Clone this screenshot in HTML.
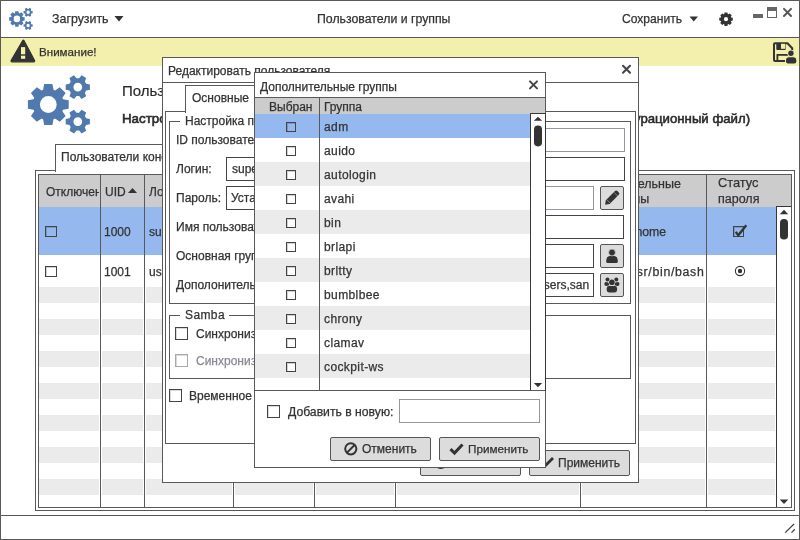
<!DOCTYPE html>
<html><head><meta charset="utf-8"><style>
html,body{margin:0;padding:0;width:800px;height:540px;overflow:hidden;background:#fff;}
body{position:relative;font-family:"Liberation Sans", sans-serif;}
body>div{-webkit-text-stroke:0.25px currentColor;will-change:transform;}
body>div,body>svg{position:absolute;box-sizing:border-box;}
</style></head><body>
<div style="left:0px;top:0px;width:800px;height:540px;background:#fff;border:1px solid #595959;"></div>
<svg style="left:0px;top:0px;width:40px;height:37px" viewBox="0 0 40 37"><path fill="#5079ad" fill-rule="evenodd" d="M14.92,13.31 L15.33,11.15 L18.47,11.15 L18.88,13.31 L19.45,13.55 L21.27,12.31 L23.49,14.53 L22.25,16.35 L22.49,16.92 L24.65,17.33 L24.65,20.47 L22.49,20.88 L22.25,21.45 L23.49,23.27 L21.27,25.49 L19.45,24.25 L18.88,24.49 L18.47,26.65 L15.33,26.65 L14.92,24.49 L14.35,24.25 L12.53,25.49 L10.31,23.27 L11.55,21.45 L11.31,20.88 L9.15,20.47 L9.15,17.33 L11.31,16.92 L11.55,16.35 L10.31,14.53 L12.53,12.31 L14.35,13.55Z M20.09,18.90 A3.192,3.192 0 1,0 13.71,18.90 A3.192,3.192 0 1,0 20.09,18.90Z M31.29,11.02 L32.71,11.28 L32.71,13.29 L31.29,13.56 L30.80,14.40 L31.28,15.77 L29.54,16.78 L28.60,15.67 L27.62,15.67 L26.68,16.78 L24.94,15.77 L25.42,14.40 L24.93,13.56 L23.51,13.29 L23.51,11.28 L24.93,11.02 L25.42,10.17 L24.94,8.80 L26.68,7.80 L27.62,8.90 L28.60,8.90 L29.54,7.80 L31.28,8.80 L30.80,10.17Z M29.78,12.29 A1.6720000000000002,1.6720000000000002 0 1,0 26.44,12.29 A1.6720000000000002,1.6720000000000002 0 1,0 29.78,12.29Z M31.29,24.13 L32.71,24.39 L32.71,26.40 L31.29,26.67 L30.80,27.51 L31.28,28.88 L29.54,29.89 L28.60,28.78 L27.62,28.78 L26.68,29.89 L24.94,28.88 L25.42,27.51 L24.93,26.67 L23.51,26.40 L23.51,24.39 L24.93,24.13 L25.42,23.28 L24.94,21.91 L26.68,20.91 L27.62,22.01 L28.60,22.01 L29.54,20.91 L31.28,21.91 L30.80,23.28Z M29.78,25.40 A1.6720000000000002,1.6720000000000002 0 1,0 26.44,25.40 A1.6720000000000002,1.6720000000000002 0 1,0 29.78,25.40Z"/></svg>
<div style="left:52px;top:12.60px;font-size:12.4px;line-height:12.4px;color:#333333;font-weight:normal;white-space:pre;">Загрузить</div>
<svg style="left:114px;top:15px;width:10px;height:7px" viewBox="0 0 10 7"><path d="M0.5,1 L9.5,1 L5,6.5Z" fill="#333"/></svg>
<div style="left:317px;top:13.19px;font-size:12.3px;line-height:12.3px;color:#333333;font-weight:normal;white-space:pre;">Пользователи и группы</div>
<div style="left:622px;top:13.26px;font-size:12.1px;line-height:12.1px;color:#333333;font-weight:normal;white-space:pre;">Сохранить</div>
<svg style="left:689px;top:15px;width:10px;height:7px" viewBox="0 0 10 7"><path d="M0.5,1.5 L9,1.5 L4.75,6.5Z" fill="#333"/></svg>
<svg style="left:716px;top:9px;width:20px;height:20px" viewBox="0 0 20 20"><path fill="#333" fill-rule="evenodd" d="M8.20,5.11 L8.63,3.44 L11.37,3.44 L11.80,5.11 L12.33,5.33 L13.81,4.45 L15.75,6.39 L14.87,7.87 L15.09,8.40 L16.76,8.83 L16.76,11.57 L15.09,12.00 L14.87,12.53 L15.75,14.01 L13.81,15.95 L12.33,15.07 L11.80,15.29 L11.37,16.96 L8.63,16.96 L8.20,15.29 L7.67,15.07 L6.19,15.95 L4.25,14.01 L5.13,12.53 L4.91,12.00 L3.24,11.57 L3.24,8.83 L4.91,8.40 L5.13,7.87 L4.25,6.39 L6.19,4.45 L7.67,5.33Z M12.10,10.20 A2.1,2.1 0 1,0 7.90,10.20 A2.1,2.1 0 1,0 12.10,10.20Z"/></svg>
<div style="left:753px;top:14px;width:10px;height:4px;background:#666;"></div>
<div style="left:767px;top:7px;width:10px;height:11px;border:1px solid #666;border-width:4.5px 1px 1px 1px;"></div>
<svg style="left:782px;top:7px;width:11px;height:11px" viewBox="0 0 11 11"><path d="M2,1.9 L9,9 M9,1.9 L2,9" stroke="#555" stroke-width="2" stroke-linecap="round"/></svg>
<div style="left:1px;top:37px;width:798px;height:1px;background:#595959;"></div>
<div style="left:1px;top:38px;width:798px;height:28px;background:#f3efac;"></div>
<svg style="left:10px;top:39px;width:26px;height:24px" viewBox="0 0 26 24"><path d="M12.9,1.4 Q13.3,0.9 13.8,1.4 L24.6,21.6 Q24.9,22.8 23.8,22.8 L1.9,22.8 Q0.8,22.8 1.1,21.6Z" fill="#333" stroke="#333" stroke-width="1.2" stroke-linejoin="round"/><rect x="11" y="8.1" width="4.2" height="7.2" fill="#f3efac"/><rect x="11" y="16.7" width="4.2" height="3.1" fill="#f3efac"/></svg>
<div style="left:39.3px;top:46.08px;font-size:11.6px;line-height:11.6px;color:#333333;font-weight:normal;white-space:pre;">Внимание!</div>
<svg style="left:771px;top:40px;width:28px;height:26px" viewBox="0 0 28 26"><path d="M4,3.2 L16.5,3.2 L21.2,8.2 L21.2,20.9 L4,20.9 Q3,20.9 3,19.9 L3,4.2 Q3,3.2 4,3.2Z" fill="none" stroke="#333" stroke-width="2" stroke-linejoin="round"/><rect x="5.3" y="3" width="9.4" height="7" rx="0.8" fill="#333"/><rect x="10" y="3.8" width="4.2" height="5" fill="#f3efac"/><rect x="6.4" y="14.9" width="11.9" height="6" fill="none" stroke="#333" stroke-width="1.8"/><circle cx="19.9" cy="13.3" r="3.6" fill="#f3efac"/><rect x="14" y="16.2" width="12.3" height="8.4" rx="3.4" fill="#f3efac"/><circle cx="19.9" cy="13.3" r="2.7" fill="#333"/><path d="M15,21.6 L15,20.4 Q15,17.2 18.2,17.2 L22.1,17.2 Q25.3,17.2 25.3,20.4 L25.3,21.6 Q25.3,23.6 23.3,23.6 L17,23.6 Q15,23.6 15,21.6Z" fill="#333"/></svg>
<div style="left:1px;top:515px;width:798px;height:1px;background:#595959;"></div>
<svg style="left:783px;top:522px;width:14px;height:12px" viewBox="0 0 14 12"><path d="M2.2,10.6 L11,2 M8.5,10.6 L11.8,7.3" stroke="#444" stroke-width="1.3"/></svg>
<svg style="left:0px;top:0px;width:120px;height:140px" viewBox="0 0 120 140"><path fill="#5079ad" fill-rule="evenodd" d="M43.10,89.79 L44.17,84.11 L52.43,84.11 L53.50,89.79 L55.02,90.42 L59.79,87.16 L65.64,93.01 L62.38,97.78 L63.01,99.30 L68.69,100.37 L68.69,108.63 L63.01,109.70 L62.38,111.22 L65.64,115.99 L59.79,121.84 L55.02,118.58 L53.50,119.21 L52.43,124.89 L44.17,124.89 L43.10,119.21 L41.58,118.58 L36.81,121.84 L30.96,115.99 L34.22,111.22 L33.59,109.70 L27.91,108.63 L27.91,100.37 L33.59,99.30 L34.22,97.78 L30.96,93.01 L36.81,87.16 L41.58,90.42Z M56.70,104.50 A8.4,8.4 0 1,0 39.90,104.50 A8.4,8.4 0 1,0 56.70,104.50Z M86.16,83.76 L89.91,84.45 L89.91,89.75 L86.16,90.44 L84.87,92.67 L86.15,96.27 L81.57,98.91 L79.09,96.01 L76.51,96.01 L74.03,98.91 L69.45,96.27 L70.73,92.67 L69.44,90.44 L65.69,89.75 L65.69,84.45 L69.44,83.76 L70.73,81.53 L69.45,77.93 L74.03,75.29 L76.51,78.19 L79.09,78.19 L81.57,75.29 L86.15,77.93 L84.87,81.53Z M82.20,87.10 A4.4,4.4 0 1,0 73.40,87.10 A4.4,4.4 0 1,0 82.20,87.10Z M86.16,118.26 L89.91,118.95 L89.91,124.25 L86.16,124.94 L84.87,127.17 L86.15,130.77 L81.57,133.41 L79.09,130.51 L76.51,130.51 L74.03,133.41 L69.45,130.77 L70.73,127.17 L69.44,124.94 L65.69,124.25 L65.69,118.95 L69.44,118.26 L70.73,116.03 L69.45,112.43 L74.03,109.79 L76.51,112.69 L79.09,112.69 L81.57,109.79 L86.15,112.43 L84.87,116.03Z M82.20,121.60 A4.4,4.4 0 1,0 73.40,121.60 A4.4,4.4 0 1,0 82.20,121.60Z"/></svg>
<div style="left:121.9px;top:83.20px;font-size:15px;line-height:15px;color:#2a2a2a;font-weight:normal;white-space:pre;-webkit-text-stroke:0.2px #2a2a2a;">Пользователи и группы</div>
<div style="left:121.9px;top:112.34px;font-size:13.3px;line-height:13.3px;color:#2a2a2a;font-weight:normal;white-space:pre;-webkit-text-stroke:0.6px #2a2a2a;">Настройки</div>
<div style="right:49.5px;top:112.43px;font-size:13.2px;line-height:13.2px;color:#2a2a2a;font-weight:normal;white-space:pre;-webkit-text-stroke:0.55px #2a2a2a;">(конфигурационный файл)</div>
<div style="left:55px;top:144px;width:246px;height:28px;background:#fff;border:1px solid #595959;border-bottom:none;"></div>
<div style="left:61.2px;top:151.14px;font-size:12px;line-height:12px;color:#333333;font-weight:normal;white-space:pre;">Пользователи конфигурационного файла</div>
<div style="left:35px;top:170px;width:760px;height:341px;border:1px solid #595959;"></div>
<div style="left:56px;top:170px;width:244px;height:1px;background:#fff;"></div>
<div style="left:38px;top:174px;width:754px;height:334px;border:1px solid #595959;"></div>
<div style="left:39px;top:175px;width:752px;height:32px;background:#cccccc;"></div>
<div style="left:39px;top:207px;width:737px;height:48px;background:#95b9ef;"></div>
<div style="left:39px;top:287px;width:736px;height:16px;background:#ebebeb;"></div>
<div style="left:39px;top:319px;width:736px;height:16px;background:#ebebeb;"></div>
<div style="left:39px;top:351px;width:736px;height:16px;background:#ebebeb;"></div>
<div style="left:39px;top:383px;width:736px;height:16px;background:#ebebeb;"></div>
<div style="left:39px;top:415px;width:736px;height:16px;background:#ebebeb;"></div>
<div style="left:39px;top:447px;width:736px;height:16px;background:#ebebeb;"></div>
<div style="left:39px;top:479px;width:736px;height:16px;background:#ebebeb;"></div>
<div style="left:99px;top:287px;width:3px;height:220px;background:#fff;"></div>
<div style="left:100px;top:175px;width:1px;height:332px;background:#595959;"></div>
<div style="left:143px;top:287px;width:3px;height:220px;background:#fff;"></div>
<div style="left:144px;top:175px;width:1px;height:332px;background:#595959;"></div>
<div style="left:232px;top:287px;width:3px;height:220px;background:#fff;"></div>
<div style="left:233px;top:175px;width:1px;height:332px;background:#595959;"></div>
<div style="left:313px;top:287px;width:3px;height:220px;background:#fff;"></div>
<div style="left:314px;top:175px;width:1px;height:332px;background:#595959;"></div>
<div style="left:394px;top:287px;width:3px;height:220px;background:#fff;"></div>
<div style="left:395px;top:175px;width:1px;height:332px;background:#595959;"></div>
<div style="left:579px;top:287px;width:3px;height:220px;background:#fff;"></div>
<div style="left:580px;top:175px;width:1px;height:332px;background:#595959;"></div>
<div style="left:705px;top:287px;width:3px;height:220px;background:#fff;"></div>
<div style="left:706px;top:175px;width:1px;height:332px;background:#595959;"></div>
<div style="left:45.7px;top:186.44px;font-size:12px;line-height:12px;color:#333333;font-weight:normal;white-space:pre;width:53.3px;overflow:hidden;">Отключен</div>
<div style="left:104.5px;top:186.44px;font-size:12px;line-height:12px;color:#333333;font-weight:normal;white-space:pre;">UID</div>
<svg style="left:127px;top:187px;width:11px;height:7px" viewBox="0 0 11 7"><path d="M1,6 L10,6 L5.5,1Z" fill="#333"/></svg>
<div style="left:149px;top:186.44px;font-size:12px;line-height:12px;color:#333333;font-weight:normal;white-space:pre;width:83px;overflow:hidden;">Логин</div>
<div style="right:119px;top:177.72px;font-size:12.5px;line-height:12.5px;color:#333333;font-weight:normal;white-space:pre;">Дополнительные</div>
<div style="right:151px;top:193.32px;font-size:12.5px;line-height:12.5px;color:#333333;font-weight:normal;white-space:pre;">группы</div>
<div style="left:717.8px;top:177.46px;font-size:12.8px;line-height:12.8px;color:#333333;font-weight:normal;white-space:pre;">Статус</div>
<div style="left:717.8px;top:193.32px;font-size:12.5px;line-height:12.5px;color:#333333;font-weight:normal;white-space:pre;">пароля</div>
<div style="left:45px;top:226px;width:12px;height:12px;background:transparent;border:1px solid #444;box-shadow: inset 1px 1px 0 rgba(0,0,0,0.18);height:11px;"></div>
<div style="left:103.9px;top:226.14px;font-size:12px;line-height:12px;color:#333333;font-weight:normal;white-space:pre;">1000</div>
<div style="left:149px;top:226.14px;font-size:12px;line-height:12px;color:#333333;font-weight:normal;white-space:pre;width:83px;overflow:hidden;">superadmin</div>
<div style="right:133.39999999999998px;top:225.79px;font-size:12.3px;line-height:12.3px;color:#333333;font-weight:normal;white-space:pre;">/home</div>
<div style="left:733px;top:226px;width:11px;height:11px;background:transparent;border:1px solid #444;box-shadow: inset 1px 1px 0 rgba(0,0,0,0.18);"></div>
<svg style="left:734px;top:223px;width:14px;height:14px" viewBox="0 0 14 14"><path d="M1.8,8.8 L4.3,12.3 L12.3,2.3" fill="none" stroke="#333" stroke-width="2.3"/></svg>
<div style="left:45px;top:266px;width:12px;height:12px;background:#fff;border:1px solid #444;box-shadow: inset 1px 1px 0 rgba(0,0,0,0.18);height:11px;"></div>
<div style="left:103.9px;top:266.44px;font-size:12px;line-height:12px;color:#333333;font-weight:normal;white-space:pre;">1001</div>
<div style="left:149px;top:266.44px;font-size:12px;line-height:12px;color:#333333;font-weight:normal;white-space:pre;width:83px;overflow:hidden;">user</div>
<div style="right:95.5px;top:265.69px;font-size:12.3px;line-height:12.3px;color:#333333;font-weight:normal;white-space:pre;letter-spacing:0.7px;">/usr/bin/bash</div>
<svg style="left:734px;top:265px;width:12px;height:12px" viewBox="0 0 12 12"><circle cx="6" cy="6" r="4.6" fill="#fff" stroke="#333" stroke-width="1.1"/><circle cx="6" cy="6" r="2.2" fill="#333"/></svg>
<div style="left:776px;top:207px;width:15px;height:300px;background:#fff;"></div>
<div style="left:776px;top:207px;width:1px;height:300px;background:#383838;"></div>
<div style="left:776px;top:206px;width:15px;height:1px;background:#383838;"></div>
<svg style="left:777px;top:207px;width:14px;height:300px" viewBox="0 0 14 300"><path d="M2.8,7.2 L11.2,7.2 L7,2.8Z" fill="#333"/><rect x="3" y="12" width="8" height="20.6" rx="3.8" fill="#333"/><path d="M2.8,292.5 L11.2,292.5 L7,296.9Z" fill="#333"/></svg>
<div style="left:162px;top:57px;width:477px;height:426px;background:#fff;border:1px solid #595959;"></div>
<div style="left:167.7px;top:64.84px;font-size:12px;line-height:12px;color:#333333;font-weight:normal;white-space:pre;">Редактировать пользователя</div>
<svg style="left:621px;top:64px;width:11px;height:11px" viewBox="0 0 11 11"><path d="M2,1.8 L9,8.8 M9,1.8 L2,8.8" stroke="#444" stroke-width="2" stroke-linecap="round"/></svg>
<div style="left:163px;top:82px;width:475px;height:1px;background:#595959;"></div>
<div style="left:185px;top:85px;width:146px;height:28px;background:#fff;border:1px solid #595959;border-bottom:none;"></div>
<div style="left:191.7px;top:91.84px;font-size:12px;line-height:12px;color:#333333;font-weight:normal;white-space:pre;">Основные</div>
<div style="left:165px;top:111px;width:471px;height:333px;border:1px solid #595959;"></div>
<div style="left:186px;top:111px;width:144px;height:1px;background:#fff;"></div>
<div style="left:169px;top:121px;width:462px;height:183px;border:1px solid #595959;"></div>
<div style="left:180px;top:118px;width:151px;height:7px;background:#fff;"></div>
<div style="left:184.5px;top:114.94px;font-size:12px;line-height:12px;color:#333333;font-weight:normal;white-space:pre;">Настройка пользователя</div>
<div style="left:175.9px;top:134.24px;font-size:12px;line-height:12px;color:#333333;font-weight:normal;white-space:pre;">ID пользователя:</div>
<div style="left:175.9px;top:163.24px;font-size:12px;line-height:12px;color:#333333;font-weight:normal;white-space:pre;">Логин:</div>
<div style="left:175.9px;top:192.24px;font-size:12px;line-height:12px;color:#333333;font-weight:normal;white-space:pre;">Пароль:</div>
<div style="left:175.9px;top:221.24px;font-size:12px;line-height:12px;color:#333333;font-weight:normal;white-space:pre;">Имя пользователя:</div>
<div style="left:175.9px;top:250.24px;font-size:12px;line-height:12px;color:#333333;font-weight:normal;white-space:pre;">Основная группа:</div>
<div style="left:175.9px;top:279.24px;font-size:12px;line-height:12px;color:#333333;font-weight:normal;white-space:pre;">Дополонительные группы:</div>
<div style="left:300px;top:128px;width:325px;height:24px;border:1px solid #9696a2;"></div>
<div style="left:226px;top:157px;width:399px;height:24px;border:1px solid #444;"></div>
<div style="left:231.9px;top:163.24px;font-size:12px;line-height:12px;color:#333333;font-weight:normal;white-space:pre;">superadmin</div>
<div style="left:226px;top:186px;width:175px;height:24px;border:1px solid #444;"></div>
<div style="left:400px;top:186px;width:194px;height:24px;border:1px solid #9696a2;"></div>
<div style="left:231px;top:192.24px;font-size:12px;line-height:12px;color:#333333;font-weight:normal;white-space:pre;">Установлен</div>
<div style="left:300px;top:215px;width:324px;height:24px;border:1px solid #444;"></div>
<div style="left:300px;top:244px;width:294px;height:24px;border:1px solid #444;"></div>
<div style="left:300px;top:273px;width:294px;height:24px;border:1px solid #444;"></div>
<div style="right:211px;top:278.94px;font-size:12px;line-height:12px;color:#333333;font-weight:normal;white-space:pre;">users,sambashare,users,san</div>
<div style="left:600px;top:186px;width:24px;height:24px;background:#dcdcdc;border:1px solid #555;border-radius:2px;"></div>
<svg style="left:601px;top:187px;width:22px;height:22px" viewBox="0 0 22 22"><path d="M4.1,17.8 L4.8,13.3 L14.0,4.0 Q15.2,2.8 16.4,4.0 L17.8,5.4 Q19.0,6.6 17.8,7.8 L8.6,17.0 Z" fill="#333"/><path d="M5.6,12.5 L9.4,16.3" stroke="#9a9a9a" stroke-width="0.8"/><path d="M12.9,5.3 L16.6,9.0" stroke="#bbb" stroke-width="0.6"/></svg>
<div style="left:600px;top:244px;width:24px;height:24px;background:#dcdcdc;border:1px solid #555;border-radius:2px;"></div>
<svg style="left:601px;top:245px;width:22px;height:22px" viewBox="0 0 22 22"><path d="M5.2,16 Q5.2,11.3 8.7,11 L13.3,11 Q16.8,11.3 16.8,16 L16.8,16.4 Q16.8,18 15.2,18 L6.8,18 Q5.2,18 5.2,16.4Z" fill="#333"/><circle cx="11" cy="7.5" r="3.4" fill="#333" stroke="#dcdcdc" stroke-width="0.7"/></svg>
<div style="left:600px;top:273px;width:24px;height:24px;background:#dcdcdc;border:1px solid #555;border-radius:2px;"></div>
<svg style="left:601px;top:274px;width:22px;height:22px" viewBox="0 0 22 22"><circle cx="6.5" cy="5.5" r="2.0" fill="#333"/><circle cx="15.3" cy="5.5" r="2.0" fill="#333"/><path d="M3.4,10.2 Q3.2,8.2 4.6,8 L7.6,8.6 L8.6,11.6 L5,11.9 Q3.6,11.8 3.4,10.2Z M18.4,10.2 Q18.6,8.2 17.2,8 L14.2,8.6 L13.2,11.6 L16.8,11.9 Q18.2,11.8 18.4,10.2Z" fill="#333"/><circle cx="10.9" cy="8.3" r="3.3" fill="#dcdcdc"/><circle cx="10.9" cy="8.3" r="2.8" fill="#333"/><rect x="5.2" y="11.6" width="11.4" height="7.6" rx="3" fill="#dcdcdc"/><rect x="5.7" y="12.1" width="10.4" height="6.3" rx="2.3" fill="#333"/></svg>
<div style="left:169px;top:315px;width:462px;height:64px;border:1px solid #595959;"></div>
<div style="left:180px;top:310px;width:49px;height:11px;background:#fff;"></div>
<div style="left:184.6px;top:309.14px;font-size:12px;line-height:12px;color:#333333;font-weight:normal;white-space:pre;letter-spacing:0.4px;">Samba</div>
<div style="left:175px;top:327px;width:13px;height:13px;background:#fff;border:1px solid #444;box-sizing:border-box;box-shadow: inset 1px 1px 0 rgba(0,0,0,0.15);"></div>
<div style="left:195.5px;top:328.24px;font-size:12px;line-height:12px;color:#333333;font-weight:normal;white-space:pre;">Синхронизировать пароль с Samba</div>
<div style="left:175px;top:354px;width:13px;height:13px;background:#fff;border:1px solid #aaa;box-sizing:border-box;box-shadow: inset 1px 1px 0 rgba(0,0,0,0.15);"></div>
<div style="left:195.5px;top:355.24px;font-size:12px;line-height:12px;color:#8a8a96;font-weight:normal;white-space:pre;">Синхронизировать</div>
<div style="left:169px;top:389px;width:13px;height:13px;background:#fff;border:1px solid #444;box-sizing:border-box;box-shadow: inset 1px 1px 0 rgba(0,0,0,0.15);"></div>
<div style="left:189px;top:390.44px;font-size:12px;line-height:12px;color:#333333;font-weight:normal;white-space:pre;">Временное</div>
<div style="left:420px;top:450px;width:101px;height:26px;background:#dcdcdc;border:1px solid #555;border-radius:2px;"></div>
<svg style="left:433px;top:454px;width:16px;height:16px" viewBox="0 0 16 16"><circle cx="7.8" cy="8.2" r="5.8" fill="none" stroke="#333" stroke-width="2.1"/></svg>
<div style="left:529px;top:450px;width:101px;height:26px;background:#dcdcdc;border:1px solid #555;border-radius:2px;"></div>
<div style="left:558px;top:457.14px;font-size:12px;line-height:12px;color:#333333;font-weight:normal;white-space:pre;">Применить</div>
<svg style="left:541px;top:453px;width:16px;height:18px" viewBox="0 0 16 18"><path d="M3,15 L4,11 L11,4 L13,6 L6,13Z" fill="#333"/></svg>
<div style="left:254px;top:72px;width:292px;height:396px;background:#fff;border:1px solid #595959;"></div>
<div style="left:260px;top:80.74px;font-size:12px;line-height:12px;color:#333333;font-weight:normal;white-space:pre;">Дополнительные группы</div>
<svg style="left:528px;top:79px;width:11px;height:11px" viewBox="0 0 11 11"><path d="M2,2.4 L9,9.4 M9,2.4 L2,9.4" stroke="#444" stroke-width="2" stroke-linecap="round"/></svg>
<div style="left:255px;top:97px;width:290px;height:1px;background:#595959;"></div>
<div style="left:255px;top:98px;width:290px;height:16px;background:#cccccc;"></div>
<div style="left:268.75px;top:101.19px;font-size:12px;line-height:12px;color:#333333;font-weight:normal;white-space:pre;">Выбран</div>
<div style="left:323.5px;top:101.19px;font-size:12px;line-height:12px;color:#333333;font-weight:normal;white-space:pre;">Группа</div>
<div style="left:255px;top:114px;width:275px;height:24px;background:#95b9ef;"></div>
<div style="left:286px;top:122px;width:10px;height:10px;background:transparent;border:1px solid #444;box-shadow: inset 1px 1px 0 rgba(0,0,0,0.18);"></div>
<div style="left:323.6px;top:121.14px;font-size:12px;line-height:12px;color:#333333;font-weight:normal;white-space:pre;letter-spacing:0.4px;">adm</div>
<div style="left:286px;top:146px;width:10px;height:10px;background:#fff;border:1px solid #444;box-shadow: inset 1px 1px 0 rgba(0,0,0,0.18);"></div>
<div style="left:323.6px;top:145.14px;font-size:12px;line-height:12px;color:#333333;font-weight:normal;white-space:pre;letter-spacing:0.4px;">auido</div>
<div style="left:255px;top:162px;width:275px;height:24px;background:#ebebeb;"></div>
<div style="left:286px;top:170px;width:10px;height:10px;background:#fff;border:1px solid #444;box-shadow: inset 1px 1px 0 rgba(0,0,0,0.18);"></div>
<div style="left:323.6px;top:169.14px;font-size:12px;line-height:12px;color:#333333;font-weight:normal;white-space:pre;letter-spacing:0.4px;">autologin</div>
<div style="left:286px;top:194px;width:10px;height:10px;background:#fff;border:1px solid #444;box-shadow: inset 1px 1px 0 rgba(0,0,0,0.18);"></div>
<div style="left:323.6px;top:193.14px;font-size:12px;line-height:12px;color:#333333;font-weight:normal;white-space:pre;letter-spacing:0.4px;">avahi</div>
<div style="left:255px;top:210px;width:275px;height:24px;background:#ebebeb;"></div>
<div style="left:286px;top:218px;width:10px;height:10px;background:#fff;border:1px solid #444;box-shadow: inset 1px 1px 0 rgba(0,0,0,0.18);"></div>
<div style="left:323.6px;top:217.14px;font-size:12px;line-height:12px;color:#333333;font-weight:normal;white-space:pre;letter-spacing:0.4px;">bin</div>
<div style="left:286px;top:242px;width:10px;height:10px;background:#fff;border:1px solid #444;box-shadow: inset 1px 1px 0 rgba(0,0,0,0.18);"></div>
<div style="left:323.6px;top:241.14px;font-size:12px;line-height:12px;color:#333333;font-weight:normal;white-space:pre;letter-spacing:0.4px;">brlapi</div>
<div style="left:255px;top:258px;width:275px;height:24px;background:#ebebeb;"></div>
<div style="left:286px;top:266px;width:10px;height:10px;background:#fff;border:1px solid #444;box-shadow: inset 1px 1px 0 rgba(0,0,0,0.18);"></div>
<div style="left:323.6px;top:265.14px;font-size:12px;line-height:12px;color:#333333;font-weight:normal;white-space:pre;letter-spacing:0.4px;">brltty</div>
<div style="left:286px;top:290px;width:10px;height:10px;background:#fff;border:1px solid #444;box-shadow: inset 1px 1px 0 rgba(0,0,0,0.18);"></div>
<div style="left:323.6px;top:289.14px;font-size:12px;line-height:12px;color:#333333;font-weight:normal;white-space:pre;letter-spacing:0.4px;">bumblbee</div>
<div style="left:255px;top:306px;width:275px;height:24px;background:#ebebeb;"></div>
<div style="left:286px;top:314px;width:10px;height:10px;background:#fff;border:1px solid #444;box-shadow: inset 1px 1px 0 rgba(0,0,0,0.18);"></div>
<div style="left:323.6px;top:313.14px;font-size:12px;line-height:12px;color:#333333;font-weight:normal;white-space:pre;letter-spacing:0.4px;">chrony</div>
<div style="left:286px;top:338px;width:10px;height:10px;background:#fff;border:1px solid #444;box-shadow: inset 1px 1px 0 rgba(0,0,0,0.18);"></div>
<div style="left:323.6px;top:337.14px;font-size:12px;line-height:12px;color:#333333;font-weight:normal;white-space:pre;letter-spacing:0.4px;">clamav</div>
<div style="left:255px;top:354px;width:275px;height:24px;background:#ebebeb;"></div>
<div style="left:286px;top:362px;width:10px;height:10px;background:#fff;border:1px solid #444;box-shadow: inset 1px 1px 0 rgba(0,0,0,0.18);"></div>
<div style="left:323.6px;top:361.14px;font-size:12px;line-height:12px;color:#333333;font-weight:normal;white-space:pre;letter-spacing:0.4px;">cockpit-ws</div>
<div style="left:319px;top:98px;width:1px;height:292px;background:#595959;"></div>
<div style="left:530px;top:113px;width:15px;height:277px;background:#fff;"></div>
<div style="left:530px;top:113px;width:1px;height:278px;background:#383838;"></div>
<div style="left:530px;top:113px;width:16px;height:1px;background:#383838;"></div>
<div style="left:545px;top:113px;width:1px;height:278px;background:#383838;"></div>
<svg style="left:531px;top:114px;width:14px;height:276px" viewBox="0 0 14 276"><path d="M2.8,6.8 L11.2,6.8 L7,2.8Z" fill="#333"/><rect x="3" y="11.6" width="8" height="20.8" rx="3.8" fill="#333"/><path d="M2.8,269 L11.2,269 L7,273.2Z" fill="#333"/></svg>
<div style="left:255px;top:390px;width:290px;height:1px;background:#595959;"></div>
<div style="left:267px;top:405px;width:13px;height:13px;background:#fff;border:1px solid #444;box-sizing:border-box;box-shadow: inset 1px 1px 0 rgba(0,0,0,0.15);"></div>
<div style="left:288px;top:406.47px;font-size:12.2px;line-height:12.2px;color:#333333;font-weight:normal;white-space:pre;">Добавить в новую:</div>
<div style="left:399px;top:399px;width:141px;height:24px;border:1px solid #9696a2;"></div>
<div style="left:330px;top:437px;width:101px;height:24px;background:#dcdcdc;border:1px solid #555;border-radius:2px;"></div>
<svg style="left:343px;top:441px;width:16px;height:16px" viewBox="0 0 16 16"><circle cx="7.8" cy="7.8" r="5.6" fill="none" stroke="#333" stroke-width="2"/><path d="M4,11.6 L11.6,4" stroke="#333" stroke-width="2"/></svg>
<div style="left:362px;top:442.74px;font-size:12px;line-height:12px;color:#333333;font-weight:normal;white-space:pre;">Отменить</div>
<div style="left:439px;top:437px;width:101px;height:24px;background:#dcdcdc;border:1px solid #555;border-radius:2px;"></div>
<svg style="left:448px;top:441px;width:18px;height:16px" viewBox="0 0 18 16"><path d="M2.5,8.2 L6.5,12 L14.5,3.5" fill="none" stroke="#333" stroke-width="3"/></svg>
<div style="left:468.4px;top:443.00px;font-size:11.7px;line-height:11.7px;color:#333333;font-weight:normal;white-space:pre;">Применить</div>
</body></html>
